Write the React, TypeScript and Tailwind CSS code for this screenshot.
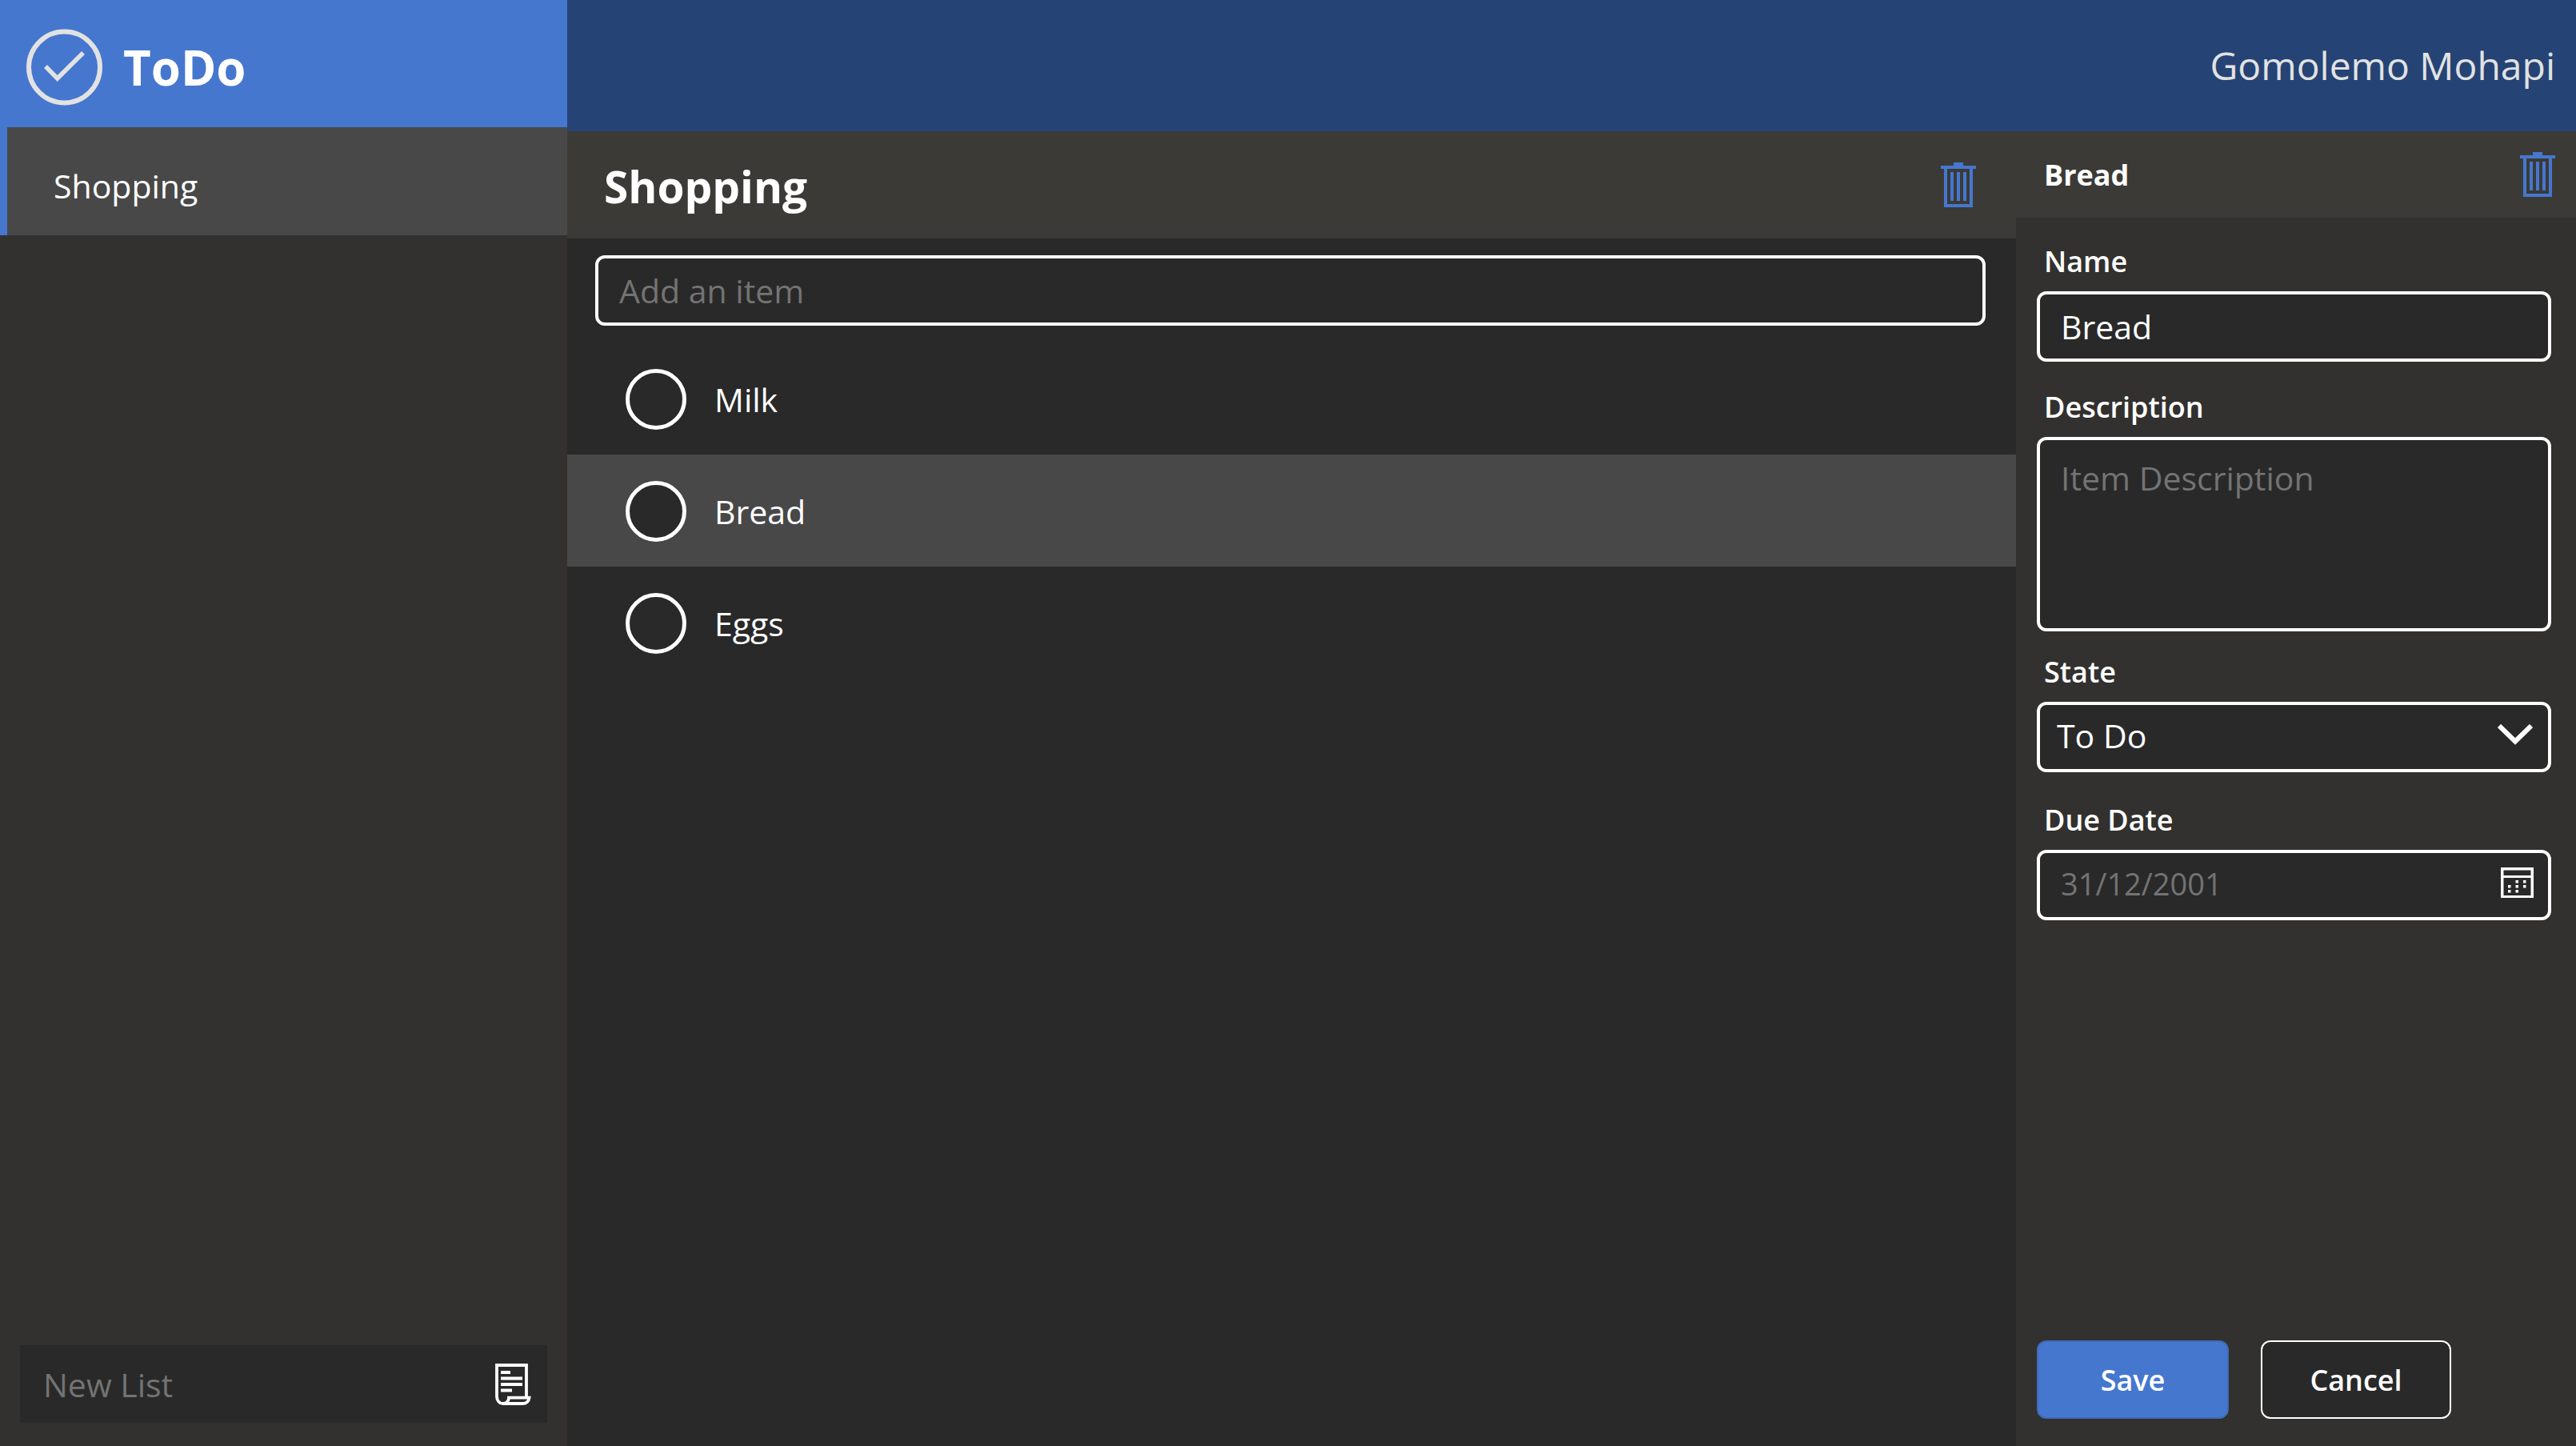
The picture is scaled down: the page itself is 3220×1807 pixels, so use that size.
import { useState } from "react";

const fieldClass =
  "h-[88px] w-full rounded-[12px] border-[4px] border-white bg-[#292929] px-[26px] font-['Open_Sans',sans-serif] leading-[54px] text-white outline-none placeholder:text-[#737373]";
const labelClass = "ml-[9px] text-[36px] font-semibold leading-[50px]";

function CheckLogo() {
  return (
    <svg viewBox="0 0 96 96" className="h-[96px] w-[96px] shrink-0" fill="none" stroke="#e2e2e2" aria-hidden="true">
      <circle cx="47.500" cy="48" r="44.500" strokeWidth="6" />
      <path d="M24 47 L38.700 62 L71 30" strokeWidth="5.500" />
    </svg>
  );
}

function TrashIcon() {
  return (
    <svg viewBox="0 0 44 56" className="h-[56px] w-[44px]" fill="#4577cf" aria-hidden="true">
      <path d="M16 0h12v4h16v4h-4v48H4V8H0V4h16zM8 8v44h28V8z" fillRule="evenodd" />
      <path d="M12 12h4v36h-4zM20 12h4v36h-4zM28 12h4v36h-4z" />
    </svg>
  );
}

function CalendarIcon() {
  return (
    <svg viewBox="0 0 41 38" className="h-[38px] w-[41px]" fill="white" aria-hidden="true">
      <path d="M0 0h41v38H0zM3.500 3.500v6.500h34V3.500zM3.500 13v22h34V13z" fillRule="evenodd" />
      <path d="M18.500 16h3.500v3.500h-3.500zM28 16h3.500v3.500H28zM9 22h3.500v3.500H9zM18.500 22h3.500v3.500h-3.500zM28 22h3.500v3.500H28zM9 28h3.500v3.500H9zM18.500 28h3.500v3.500h-3.500z" />
    </svg>
  );
}

function ScriptIcon() {
  return (
    <svg viewBox="0 0 45 52" className="h-[52px] w-[45px]" fill="none" stroke="white" strokeWidth="3.800" aria-hidden="true">
      <path d="M39 42V2H2v39c0 5 3 9 8 9h24c5 0 8-3 8.500-7.300H17c0 4-3 7.300-7 7.300" />
      <path d="M7 11h12M7 18.500h27M7 26h27M7 33.500h14" />
    </svg>
  );
}

export default function App() {
  const [items, setItems] = useState([
    { name: "Milk", done: false },
    { name: "Bread", done: false },
    { name: "Eggs", done: false },
  ]);
  const [selected, setSelected] = useState(1);

  return (
    <div className="flex min-h-screen w-full bg-[#292929] font-['Open_Sans',sans-serif] text-white">
      <aside className="flex w-[709px] shrink-0 flex-col bg-[#32312f]">
        <div className="flex h-[159px] items-center bg-[#4577cf] pl-[33px] pt-[8px]">
          <CheckLogo />
          <h1 className="ml-[25px] text-[60px] font-bold leading-[80px]">ToDo</h1>
        </div>
        <nav>
          <button
            type="button"
            className="flex h-[135px] w-full items-center border-l-[9px] border-[#4577cf] bg-[#484848] pl-[58px] pt-[10px] text-left text-[41px] leading-[54px]"
          >
            Shopping
          </button>
        </nav>
        <div className="mx-[25px] mb-[29px] mt-auto flex h-[97px] items-center bg-[#292929] pl-[29px] pr-[20px]">
          <input
            aria-label="New List"
            placeholder="New List"
            className="min-w-0 flex-1 bg-transparent text-[41px] leading-[54px] outline-none placeholder:text-[#737373]"
          />
          <button type="button" aria-label="Create list">
            <ScriptIcon />
          </button>
        </div>
      </aside>

      <div className="flex min-w-0 flex-1 flex-col">
        <header className="flex h-[164px] items-center justify-end bg-[#254375] pr-[26px] text-[48px] leading-[68px] text-[#e2e2e2]">
          Gomolemo Mohapi
        </header>
        <div className="flex flex-1">
          <main className="min-w-0 flex-1">
            <div className="flex h-[134px] items-center justify-between bg-[#3b3a37] pl-[46px] pr-[50px]">
              <h2 className="pt-1 text-[55px] font-bold leading-[74px]">Shopping</h2>
              <button type="button" aria-label="Delete list">
                <TrashIcon />
              </button>
            </div>
            <div className="pl-[35px] pr-[38px] pt-[21px]">
              <input aria-label="Add an item" placeholder="Add an item" className={fieldClass + " text-[41px]"} />
            </div>
            <ul className="mt-[21px]">
              {items.map((item, i) => (
                <li
                  key={item.name}
                  onClick={() => setSelected(i)}
                  className={
                    "flex h-[140px] items-center pl-[73px] pt-[2px] " + (i === selected ? "bg-[#484848]" : "")
                  }
                >
                  <label className="flex items-center gap-[35px] text-[41px] leading-[54px]">
                    <input
                      type="checkbox"
                      checked={item.done}
                      onChange={() =>
                        setItems(items.map((it, j) => (j === i ? { ...it, done: !it.done } : it)))
                      }
                      className="h-[76px] w-[76px] appearance-none rounded-full border-[5px] border-white bg-[#292929] checked:bg-[#4577cf]"
                    />
                    {item.name}
                  </label>
                </li>
              ))}
            </ul>
          </main>

          <section className="flex w-[700px] shrink-0 flex-col bg-[#32312f]">
            <div className="flex h-[108px] items-center justify-between bg-[#3b3a37] pl-[35px] pr-[26px]">
              <h3 className="pt-[2px] text-[36px] font-bold leading-[50px]">Bread</h3>
              <button type="button" aria-label="Delete item">
                <TrashIcon />
              </button>
            </div>
            <form className="flex flex-1 flex-col pb-[34px] pl-[26px] pr-[31px] pt-[30px]" onSubmit={(e) => e.preventDefault()}>
              <label htmlFor="name" className={labelClass}>Name</label>
              <input id="name" defaultValue="Bread" className={fieldClass + " mt-[12px] text-[41px]"} />
              <label htmlFor="description" className={labelClass + " mt-[32px]"}>Description</label>
              <textarea
                id="description"
                placeholder="Item Description"
                className="mt-[12px] h-[243px] w-full resize-none rounded-[12px] border-[4px] border-white bg-[#292929] px-[26px] py-[20px] text-[41px] leading-[54px] outline-none placeholder:text-[#737373]"
              />
              <label htmlFor="state" className={labelClass + " mt-[26px]"}>State</label>
              <div className="relative mt-[12px]">
                <select id="state" className={fieldClass + " appearance-none pb-[4px] pl-[21px] text-[41px]"}>
                  <option>To Do</option>
                  <option>In Progress</option>
                  <option>Done</option>
                </select>
                <svg viewBox="0 0 44 26" className="pointer-events-none absolute right-[23px] top-[28px] h-[26px] w-[44px]" fill="none" stroke="white" strokeWidth="6" aria-hidden="true">
                  <path d="M2 2 L22 21.500 L42 2" />
                </svg>
              </div>
              <label htmlFor="due" className={labelClass + " mt-[35px]"}>Due Date</label>
              <div className="relative mt-[12px]">
                <input id="due" placeholder="31/12/2001" className={fieldClass + " pb-[4px] text-[38px]"} />
                <button type="button" aria-label="Pick a date" className="absolute right-[22px] top-[22px]">
                  <CalendarIcon />
                </button>
              </div>
              <div className="mt-auto flex gap-[40px]">
                <button type="submit" className="h-[98px] w-[240px] rounded-[12px] border-2 border-[#3f6bb8] bg-[#4577cf] pt-[2px] text-[36px] font-semibold leading-[50px]">
                  Save
                </button>
                <button type="button" className="h-[98px] w-[238px] rounded-[12px] border-2 border-white bg-[#292929] pt-[2px] text-[36px] font-semibold leading-[50px]">
                  Cancel
                </button>
              </div>
            </form>
          </section>
        </div>
      </div>
    </div>
  );
}
